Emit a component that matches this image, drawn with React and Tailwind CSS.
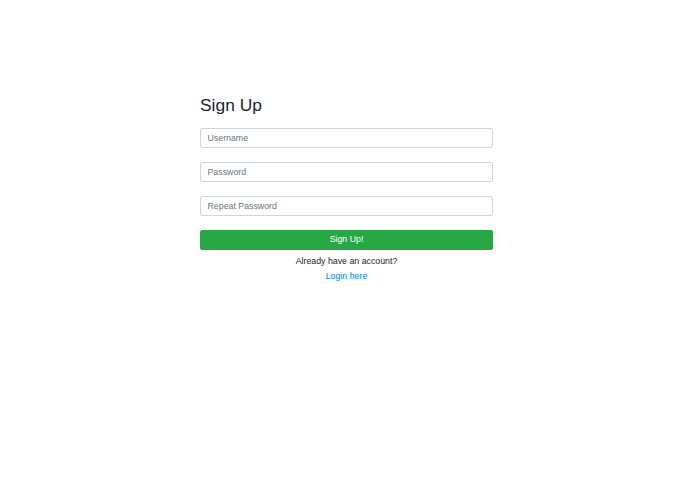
import React from "react";

export default function App() {
  return (
    <div className="min-h-screen bg-white font-['Liberation_Sans',Arial,sans-serif] text-[#212529]">
      <div className="ml-[200px] w-[293px] pt-[95px]">
        <h2 className="text-[17.4px] leading-[21px] font-normal">Sign Up</h2>
        <form className="mt-[11.7px] flex flex-col gap-[13.3px]" onSubmit={(e) => e.preventDefault()}>
          <input
            type="text"
            placeholder="Username"
            className="h-[20.7px] w-full rounded-[2px] border border-[#ced4da] px-[6.5px] text-[8.8px] text-[#495057] placeholder:text-[#6c757d] outline-none"
          />
          <input
            type="password"
            placeholder="Password"
            className="h-[20.7px] w-full rounded-[2px] border border-[#ced4da] px-[6.5px] text-[8.8px] text-[#495057] placeholder:text-[#6c757d] outline-none"
          />
          <input
            type="password"
            placeholder="Repeat Password"
            className="h-[20.7px] w-full rounded-[2px] border border-[#ced4da] px-[6.5px] text-[8.8px] text-[#495057] placeholder:text-[#6c757d] outline-none"
          />
          <button
            type="submit"
            className="h-[20.7px] w-full rounded-[2px] border border-[#28a745] bg-[#28a745] text-[8.8px] text-white"
          >
            Sign Up!
          </button>
        </form>
        <div className="mt-[4px] text-center text-[8.8px] leading-[15px]">
          <p>Already have an account?</p>
          <a href="#" className="text-[#007bff]">
            Login here
          </a>
        </div>
      </div>
    </div>
  );
}
